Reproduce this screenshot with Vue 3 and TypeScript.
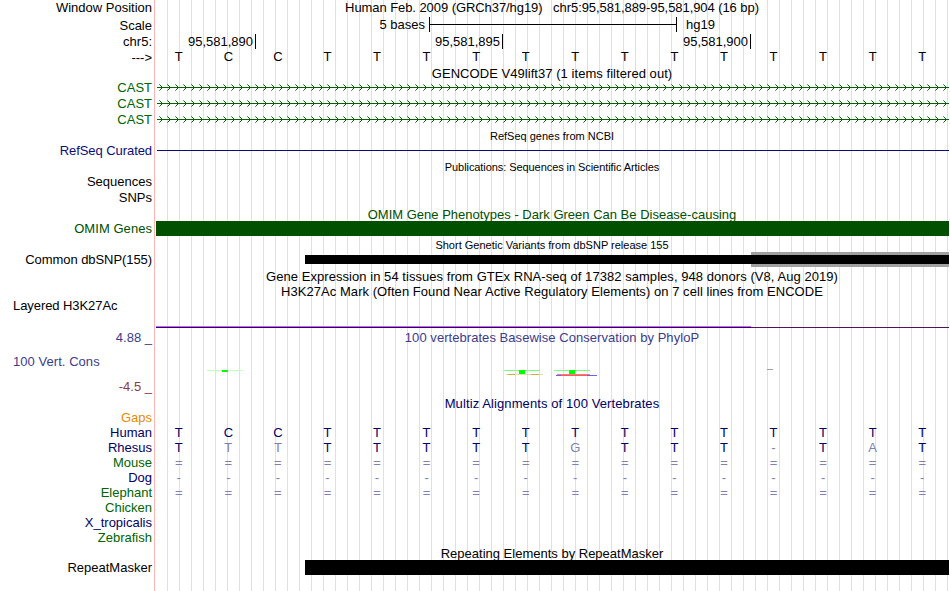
<template>
  <div class="browser">
    <div v-for="(row, i) in rows" :key="i" class="row" :class="row.size">
      <div class="label" :class="[row.color, { left: row.left }]">{{ row.label }}</div>
      <div class="track">
        <div v-if="row.title" class="title" :class="row.titleColor">{{ row.title }}</div>

        <div v-else-if="row.kind === 'scale'" class="scale">
          <span class="scale-text">5 bases</span>
          <span class="scale-bar"></span>
          <span>hg19</span>
        </div>

        <div v-else-if="row.kind === 'ruler'" class="ruler">
          <span v-for="pos in positions" :key="pos" class="tick">{{ pos }}</span>
        </div>

        <div v-else-if="row.bases" class="bases" :class="row.kind">
          <span v-for="(base, b) in row.bases" :key="b" :class="{ faded: row.faded?.includes(b) }">{{ base }}</span>
        </div>

        <svg v-else-if="row.kind === 'intron'" class="drawing" width="794" height="16" shape-rendering="crispEdges">
          <rect x="2" y="7" width="792" height="1" fill="#006400" />
          <g v-for="x in arrows" :key="x" fill="#006400">
            <rect :x="x + 2" y="6" width="1" height="1" />
            <rect :x="x + 2" y="8" width="1" height="1" />
            <rect :x="x + 1" y="5" width="1" height="1" />
            <rect :x="x + 1" y="9" width="1" height="1" />
            <rect :x="x" y="4" width="1" height="1" opacity="0.6" />
            <rect :x="x" y="10" width="1" height="1" opacity="0.6" />
          </g>
        </svg>

        <div v-else-if="row.kind === 'refseq'" class="refseq-line"></div>
        <div v-else-if="row.kind === 'omim'" class="omim-bar"></div>

        <div v-else-if="row.kind === 'snp'" class="snp">
          <div class="snp-bar"></div>
          <div class="snp-bar framed"></div>
        </div>

        <div v-else-if="row.kind === 'h3k'" class="h3k">
          <div class="h3k-signal"></div>
          <div class="h3k-base"></div>
        </div>

        <!-- PhyloP scores, x is the offset inside the track area -->
        <svg v-else-if="row.kind === 'phylop'" class="drawing" width="794" height="32" shape-rendering="crispEdges">
          <rect x="52" y="24" width="36" height="1" fill="#c4ffc4" />
          <rect x="67" y="24" width="6" height="2" fill="#00ff00" />
          <rect x="349" y="24" width="36" height="1" fill="#7dff7d" />
          <rect x="364" y="24" width="6" height="4" fill="#00ff00" />
          <rect x="351" y="28" width="37" height="1" fill="#e6dca0" />
          <rect x="353" y="28" width="7" height="1" fill="#c8b43c" />
          <rect x="376" y="28" width="8" height="1" fill="#c8b43c" />
          <rect x="399" y="24" width="36" height="1" fill="#7dff7d" />
          <rect x="414" y="24" width="6" height="4" fill="#00ff00" />
          <rect x="401" y="29" width="41" height="1" fill="#6464f0" />
          <rect x="402" y="28" width="33" height="1" fill="#ff7878" />
          <rect x="406" y="29" width="26" height="1" fill="#ff5a5a" />
          <rect x="612" y="23" width="6" height="1" fill="#a0a0a0" />
        </svg>

        <div v-else-if="row.kind === 'repeat'" class="repeat-bar"></div>
      </div>
    </div>
  </div>
</template>

<script setup lang="ts">
interface Row {
  size: string
  label?: string
  color?: string
  left?: boolean
  title?: string
  titleColor?: string
  kind?: string
  bases?: string[]
  faded?: number[]
}

const positions = ['95,581,890', '95,581,895', '95,581,900']
const reference = 'TCCTTTTTTTTTTTTT'.split('')
const rhesus = 'TTTTTTTTGTTT-TAT'.split('')
const gap = (symbol: string) => Array<string>(16).fill(symbol)

// chevrons on the introns, one every 8px
const arrows = Array.from({ length: 99 }, (_, i) => 4 + i * 8)

const rows: Row[] = [
  { size: 'h16', label: 'Window Position', title: 'Human Feb. 2009 (GRCh37/hg19)   chr5:95,581,889-95,581,904 (16 bp)', titleColor: 'tight' },
  { size: 'h18', label: 'Scale', color: 'lower', kind: 'scale' },
  { size: 'h16', label: 'chr5:', kind: 'ruler' },
  { size: 'h16', label: '--->', kind: 'sequence', bases: reference },
  { size: 'h14', title: 'GENCODE V49lift37 (1 items filtered out)', titleColor: 'loose lower' },
  { size: 'h16', label: 'CAST', color: 'gene', kind: 'intron' },
  { size: 'h16', label: 'CAST', color: 'gene', kind: 'intron' },
  { size: 'h16', label: 'CAST', color: 'gene', kind: 'intron' },
  { size: 'h15', title: 'RefSeq genes from NCBI', titleColor: 'small lower' },
  { size: 'h16', label: 'RefSeq Curated', color: 'refseq tight', kind: 'refseq' },
  { size: 'h15', title: 'Publications: Sequences in Scientific Articles', titleColor: 'small lower tight' },
  { size: 'h16', label: 'Sequences' },
  { size: 'h16', label: 'SNPs' },
  { size: 'h15', title: 'OMIM Gene Phenotypes - Dark Green Can Be Disease-causing', titleColor: 'omim lower' },
  { size: 'h16', label: 'OMIM Genes', color: 'omim loose', kind: 'omim' },
  { size: 'h15', title: 'Short Genetic Variants from dbSNP release 155', titleColor: 'small lower' },
  { size: 'h16', label: 'Common dbSNP(155)', color: 'tight', kind: 'snp' },
  { size: 'h16', title: 'Gene Expression in 54 tissues from GTEx RNA-seq of 17382 samples, 948 donors (V8, Aug 2019)', titleColor: 'loose lower' },
  { size: 'h15', title: 'H3K27Ac Mark (Often Found Near Active Regulatory Elements) on 7 cell lines from ENCODE', titleColor: 'loose' },
  { size: 'h30', label: 'Layered H3K27Ac', color: 'tight', left: true, kind: 'h3k' },
  { size: 'h17', label: '4.88 _', color: 'cons', title: '100 vertebrates Basewise Conservation by PhyloP', titleColor: 'cons loose' },
  { size: 'h32', label: '100 Vert. Cons', color: 'cons loose', left: true, kind: 'phylop' },
  { size: 'h18', label: '-4.5 _', color: 'negative' },
  { size: 'h15', title: 'Multiz Alignments of 100 Vertebrates', titleColor: 'navy looser' },
  { size: 'h15 species', label: 'Gaps', color: 'gaps' },
  { size: 'h15 species', label: 'Human', color: 'navy', kind: 'aligned', bases: reference },
  { size: 'h15 species', label: 'Rhesus', color: 'navy', kind: 'aligned', bases: rhesus, faded: [1, 2, 8, 12, 14] },
  { size: 'h15 species', label: 'Mouse', color: 'green', kind: 'unaligned', bases: gap('=') },
  { size: 'h15 species', label: 'Dog', color: 'navy', kind: 'unaligned', bases: gap('-') },
  { size: 'h15 species', label: 'Elephant', color: 'green', kind: 'unaligned', bases: gap('=') },
  { size: 'h15 species', label: 'Chicken', color: 'green' },
  { size: 'h15 species', label: 'X_tropicalis', color: 'navy' },
  { size: 'h15 species', label: 'Zebrafish', color: 'green' },
  { size: 'h14', title: 'Repeating Elements by RepeatMasker', titleColor: 'lower' },
  { size: 'h15', label: 'RepeatMasker', kind: 'repeat' },
  { size: 'rest' }
]
</script>

<style>
body {
  margin: 0;
  background: #fff;
}
</style>

<style scoped>
.browser {
  display: flex;
  flex-direction: column;
  width: 949px;
  height: 591px;
  overflow: hidden;
  font-family: "Liberation Sans", Arial, sans-serif;
  font-size: 13px;
  color: #000;
  white-space: pre;
  /* guide lines every 12px, and the edge of the label column */
  background:
    linear-gradient(#ffb4b4, #ffb4b4) 154px 0 / 1px 100% no-repeat,
    repeating-linear-gradient(to right, #dcdcff 0 1px, transparent 1px 12px) 167px 0 / 782px 100% no-repeat;
}

.row {
  display: flex;
  flex: none;
}

.h14 { height: 14px; line-height: 14px; }
.h15 { height: 15px; line-height: 15px; }
.h16 { height: 16px; line-height: 16px; }
.h17 { height: 17px; line-height: 17px; }
.h18 { height: 18px; line-height: 18px; }
.h30 { height: 30px; line-height: 13px; }
.h32 { height: 32px; line-height: 32px; }
.species { line-height: 13px; }
.rest { flex: 1; }

.label {
  flex: none;
  box-sizing: border-box;
  width: 155px;
  padding-right: 3px;
  text-align: right;
}

.label.left {
  padding-left: 13px;
  text-align: left;
}

.track {
  flex: 1;
  min-width: 0;
}

.title {
  text-align: center;
}

.lower { padding-top: 1px; }
.tight { letter-spacing: -0.07px; }
.loose { letter-spacing: 0.05px; }
.looser { letter-spacing: 0.1px; }

.small { font-size: 11px; }
.gene { color: #006400; }
.refseq { color: #0c0c78; }
.omim { color: #005000; }
.cons { color: #3c3c8c; }
.negative { color: #8c3c3c; }
.gaps { color: #e68a00; }
.navy { color: #000064; }
.green { color: #006400; }

.scale {
  display: flex;
  padding-top: 1px;
  line-height: 16px;
}

.scale-text {
  width: 270px;
  text-align: right;
}

.scale-bar {
  box-sizing: border-box;
  width: 248px;
  height: 15px;
  margin: 0 9px 0 4px;
  border: solid #000;
  border-width: 0 1px;
  background: linear-gradient(#000, #000) 0 7px / 100% 1px no-repeat;
}

.ruler {
  display: grid;
  grid-template-columns: 101px 247px 248px;
}

.tick {
  height: 15px;
  padding-right: 2px;
  border-right: 1px solid #000;
  text-align: right;
}

.bases {
  display: grid;
  grid-template-columns: repeat(16, 1fr);
  width: 793px;
  margin-left: -1px;
  text-align: center;
}

.sequence {
  line-height: 14px;
}

.aligned {
  color: #000064;
}

.unaligned,
.faded {
  color: #8080b4;
}

.drawing {
  display: block;
}

.refseq-line {
  height: 1px;
  margin: 7px 0 0 2px;
  background: #0c0c78;
}

.omim-bar {
  height: 15px;
  margin-left: 1px;
  background: #005000;
}

.snp {
  display: flex;
  align-items: center;
  height: 15px;
  padding-left: 150px;
}

.snp-bar {
  width: 446px;
  height: 9px;
  background: #000;
}

.snp-bar.framed {
  flex: 1;
  border: solid #a0a0a0;
  border-width: 3px 0;
}

.h3k {
  padding: 27px 0 0 1px;
}

.h3k-signal {
  width: 595px;
  height: 1px;
  background: #c864ff;
}

.h3k-base {
  height: 1px;
  background: linear-gradient(to right, #320064 595px, #501450 595px);
}

.repeat-bar {
  height: 15px;
  margin-left: 150px;
  background: #000;
}
</style>
